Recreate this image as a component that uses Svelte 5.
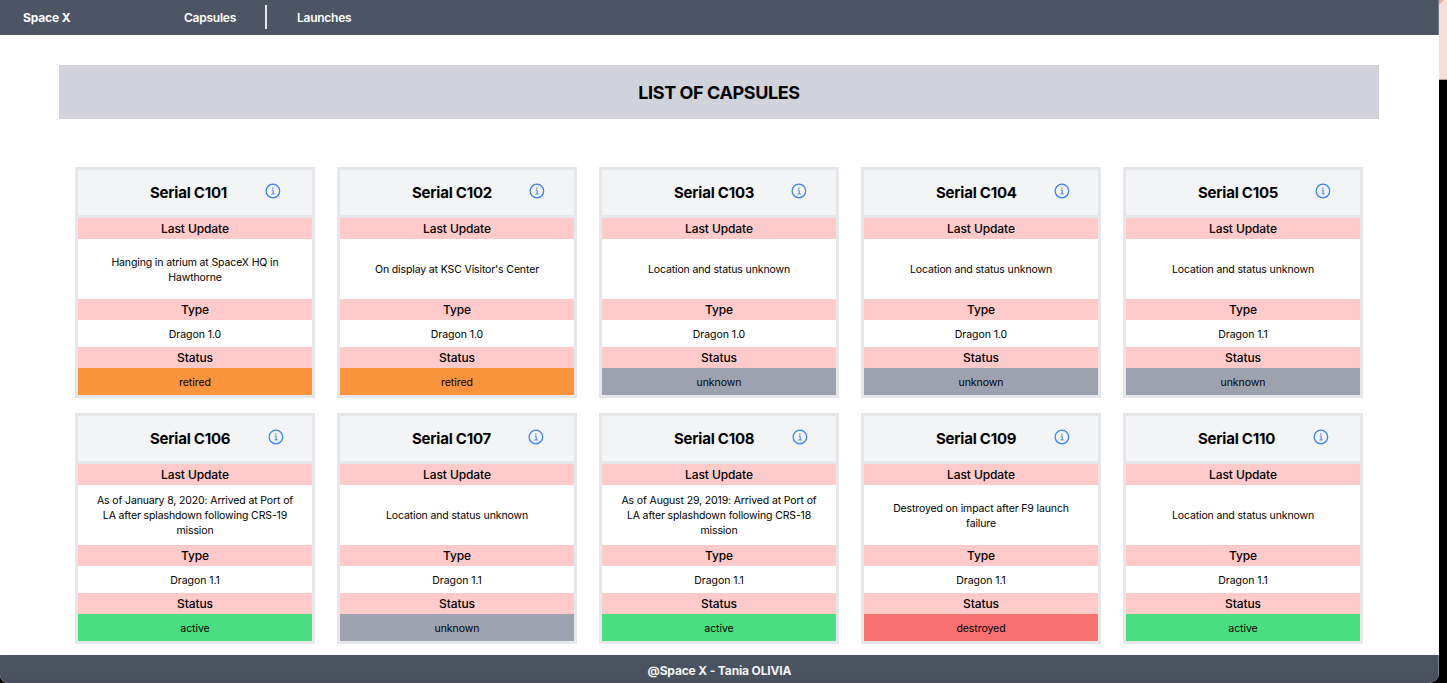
<script>
  const missing = 'Location and status unknown';
  const capsules = [
    { serial: 'C101', update: 'Hanging in atrium at SpaceX HQ in Hawthorne', type: 'Dragon 1.0', status: 'retired', titleWidth: 115 },
    { serial: 'C102', update: "On display at KSC Visitor's Center", type: 'Dragon 1.0', status: 'retired', titleWidth: 117 },
    { serial: 'C103', update: missing, type: 'Dragon 1.0', status: 'unknown', titleWidth: 117 },
    { serial: 'C104', update: missing, type: 'Dragon 1.0', status: 'unknown', titleWidth: 118 },
    { serial: 'C105', update: missing, type: 'Dragon 1.1', status: 'unknown', titleWidth: 117 },
    { serial: 'C106', update: 'As of January 8, 2020: Arrived at Port of LA after splashdown following CRS-19 mission', type: 'Dragon 1.1', status: 'active', titleWidth: 118 },
    { serial: 'C107', update: missing, type: 'Dragon 1.1', status: 'unknown', titleWidth: 116 },
    { serial: 'C108', update: 'As of August 29, 2019: Arrived at Port of LA after splashdown following CRS-18 mission', type: 'Dragon 1.1', status: 'active', titleWidth: 118 },
    { serial: 'C109', update: 'Destroyed on impact after F9 launch failure', type: 'Dragon 1.1', status: 'destroyed', titleWidth: 118 },
    { serial: 'C110', update: missing, type: 'Dragon 1.1', status: 'active', titleWidth: 115 }
  ];
</script>

<div class="screen">
  <div class="page">
    <header>
      <span class="brand">Space X</span>
      <nav>
        <span class="caps">Capsules</span>
        <span class="laun">Launches</span>
      </nav>
    </header>
    <main>
      <h1>LIST OF CAPSULES</h1>
      <section class="grid">
        {#each capsules as c}
          <article>
            <div class="head">
              <h2 style="width: {c.titleWidth}px">Serial {c.serial}</h2>
              <svg width="16" height="16" viewBox="0 0 16 16" fill="none" stroke="#3b82f6">
                <circle cx="7.9" cy="8" r="6.8" stroke-width="1.25" />
                <path d="M6.7 7.2H8.2V10.8M6.5 10.9H9.7" stroke-width="1" />
                <circle cx="7.9" cy="5.2" r=".75" fill="#3b82f6" stroke="none" />
              </svg>
            </div>
            <h3>Last Update</h3>
            <p class="update"><span>{c.update}</span></p>
            <h3>Type</h3>
            <p>{c.type}</p>
            <h3>Status</h3>
            <p class={c.status}>{c.status}</p>
          </article>
        {/each}
      </section>
    </main>
    <footer>@Space X - Tania OLIVIA</footer>
  </div>
  <aside><div class="peek"></div></aside>
</div>

<style>
  :global(body) { background: #000; overflow: hidden; }
  .screen { display: flex; width: 1447px; height: 683px; font-family: Inter, sans-serif; color: #000; background: #000; }
  .page { width: 1439px; height: 683px; display: flex; flex-direction: column; background: #fff; border-radius: 0 0 10px 8px; overflow: hidden; box-sizing: border-box; }
  header { height: 35px; flex: none; display: flex; align-items: center; background: #4b5563; color: #fff; font-size: 12px; box-shadow: inset -1px 0 #747c87; }
  .brand { width: 138px; padding-left: 23px; font-weight: 700; letter-spacing: -.15px; }
  nav { display: flex; align-items: center; font-weight: 600; padding-left: 23px; margin-top: -1px; letter-spacing: -.25px; }
  .caps { width: 81px; height: 24px; line-height: 25px; border-right: 2px solid #e5e7eb; }
  .laun { height: 24px; padding-left: 30px; line-height: 25px; }
  main { flex: 1; padding: 30px 60px 0 59px; }
  h1, h2, h3, p { margin: 0; }
  h1 { height: 54px; line-height: 55px; background: #d0d3dc; text-align: center; font-size: 18px; font-weight: 700; letter-spacing: -.4px; }
  .grid { display: grid; grid-template-columns: repeat(5, 240px); gap: 15px 22px; padding: 48px 16px 0; }
  article { height: 225px; border: 3px solid #e5e7eb; background: #fff; }
  .head { height: 45px; display: flex; align-items: center; padding-left: 72px; border-bottom: 3px solid #e5e7eb; background: #f3f4f6; }
  h2 { font-size: 15px; font-weight: 700; white-space: nowrap; letter-spacing: -.22px; }
  svg { flex: none; margin-top: -3px; }
  h3 { height: 21px; line-height: 21px; background: #fecaca; text-align: center; font-size: 12px; font-weight: 500; letter-spacing: -.1px; }
  p { height: 27px; line-height: 29px; text-align: center; font-size: 10.5px; letter-spacing: -.06px; }
  .update { height: 60px; line-height: 15px; letter-spacing: -.13px; display: flex; align-items: center; justify-content: center; padding: 0 17px; }
  .update span { padding-top: 1px; }
  .retired { background: #fb923c; }
  .unknown { background: #9ca3af; }
  .active { background: #4ade80; }
  .destroyed { background: #f87171; }
  footer { height: 28px; flex: none; line-height: 31px; text-align: center; color: #f3f4f6; font-size: 12px; font-weight: 700; letter-spacing: -.15px; background: linear-gradient(#4b5563, #47505c); box-shadow: inset -1px 0 #747c87, 0 0 14px rgba(0, 0, 0, .03); }
  aside { width: 8px; background: #000; }
  .peek { height: 79px; background: linear-gradient(135deg, #e9a99c 0 3px, #f5dfda 4px); border-bottom: 1px solid #b3a19c; }
</style>
